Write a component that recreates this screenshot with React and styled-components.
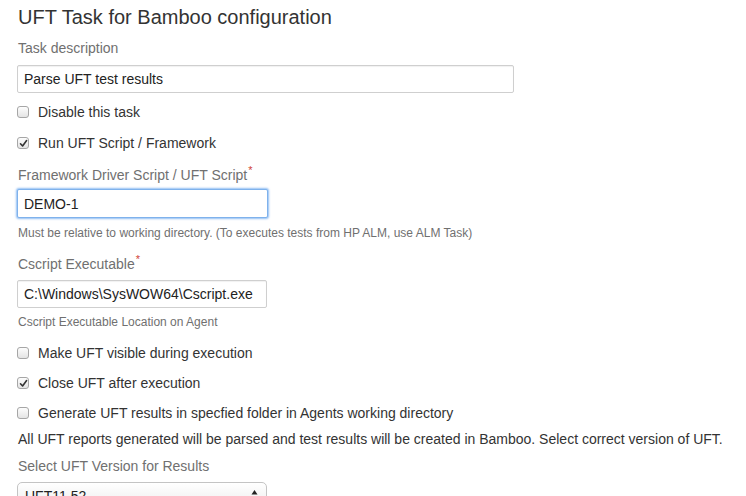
import React from "react";
import styled, { createGlobalStyle, css } from "styled-components";

const Global = createGlobalStyle`
  html, body { margin: 0; padding: 0; background: #fff; }
  body { font-family: "Liberation Sans", Arial, Helvetica, sans-serif; color: #333; overflow: hidden; }
  * { box-sizing: border-box; }
`;

const Page = styled.form`
  padding: 5px 0 0 17px;
  width: 746px;
  height: 496px;
  overflow: hidden;
`;

const Title = styled.h2`
  margin: 0 0 0 1px;
  font-size: 20px;
  line-height: 24px;
  font-weight: normal;
  color: #333;
`;

const Label = styled.label`
  display: block;
  margin: ${(p) => p.$mt}px 0 0 1px;
  font-size: 14px;
  line-height: 20px;
  color: #707070;
`;

const Req = styled.span`
  color: #d04437;
  font-size: 11px;
  position: relative;
  top: -6px;
  margin-left: 1px;
  line-height: 0;
`;

const TextInput = styled.div`
  margin-top: ${(p) => p.$mt}px;
  width: ${(p) => p.$w}px;
  height: ${(p) => p.$h || 28}px;
  border: 1px solid #cfcfcf;
  border-radius: 2px;
  background: #fff;
  box-shadow: inset 0 1px 1px rgba(0, 0, 0, 0.06);
  padding-left: 6px;
  display: flex;
  align-items: center;
  font-size: 14px;
  color: #222;
  ${(p) =>
    p.$focus &&
    css`
      border-color: #7fb2ec;
      box-shadow: 0 0 2px 1px rgba(110, 170, 240, 0.75);
    `}
`;

const CheckRow = styled.div`
  margin-top: ${(p) => p.$mt}px;
  display: flex;
  align-items: center;
  height: 20px;
  font-size: 14px;
  color: #333;
`;

const Box = styled.span`
  width: 12px;
  height: 12px;
  border: 1px solid #a6a6a6;
  border-radius: 3px;
  background: linear-gradient(#fdfdfd, #e4e4e4);
  margin-right: 9px;
  display: flex;
  align-items: center;
  justify-content: center;
  flex: none;
`;

const Help = styled.div`
  margin: ${(p) => p.$mt}px 0 0 1px;
  font-size: 12px;
  line-height: 16px;
  color: #707070;
`;

const Para = styled.p`
  margin: ${(p) => p.$mt}px 0 0 1px;
  font-size: 14px;
  line-height: 20px;
  color: #333;
`;

const Select = styled.div`
  margin-top: ${(p) => p.$mt}px;
  width: 250px;
  height: 28px;
  border: 1px solid #c4c4c4;
  border-radius: 5px;
  background: linear-gradient(#ffffff, #ececec);
  padding: 0 8px 0 7px;
  display: flex;
  align-items: center;
  justify-content: space-between;
  font-size: 14px;
  color: #222;
  position: relative;
  top: 0;
`;

const Check = ({ checked }) => (
  <Box>
    {checked && (
      <svg width="9" height="9" viewBox="0 0 9 9">
        <path d="M1.5 4.8 L3.6 7 L7.6 1.6" fill="none" stroke="#333" strokeWidth="1.6" strokeLinecap="round" strokeLinejoin="round" />
      </svg>
    )}
  </Box>
);

const CheckItem = ({ mt, checked, children }) => (
  <CheckRow $mt={mt}>
    <Check checked={checked} />
    {children}
  </CheckRow>
);

export default function App() {
  return (
    <>
      <Global />
      <Page>
        <Title>UFT Task for Bamboo configuration</Title>
        <Label $mt={9}>Task description</Label>
        <TextInput $mt={7} $w={497}>Parse UFT test results</TextInput>
        <CheckItem mt={9}>Disable this task</CheckItem>
        <CheckItem mt={11} checked>Run UFT Script / Framework</CheckItem>
        <Label $mt={12}>
          Framework Driver Script / UFT Script<Req>*</Req>
        </Label>
        <TextInput $mt={4} $w={251} $h={29} $focus>DEMO-1</TextInput>
        <Help $mt={7}>Must be relative to working directory. (To executes tests from HP ALM, use ALM Task)</Help>
        <Label $mt={13}>
          Cscript Executable<Req>*</Req>
        </Label>
        <TextInput $mt={6} $w={250}>C:\Windows\SysWOW64\Cscript.exe</TextInput>
        <Help $mt={6}>Cscript Executable Location on Agent</Help>
        <CheckItem mt={13}>Make UFT visible during execution</CheckItem>
        <CheckItem mt={10} checked>Close UFT after execution</CheckItem>
        <CheckItem mt={10}>Generate UFT results in specfied folder in Agents working directory</CheckItem>
        <Para $mt={6}>
          All UFT reports generated will be parsed and test results will be created in Bamboo. Select correct version of UFT.
        </Para>
        <Label $mt={7}>Select UFT Version for Results</Label>
        <Select $mt={6}>
          <span>UFT11.52</span>
          <svg width="7" height="14" viewBox="0 0 7 14">
            <path d="M3.5 1 L6.5 5.5 L0.5 5.5 Z" fill="#222" />
            <path d="M3.5 13 L6.5 8.5 L0.5 8.5 Z" fill="#222" />
          </svg>
        </Select>
      </Page>
    </>
  );
}
